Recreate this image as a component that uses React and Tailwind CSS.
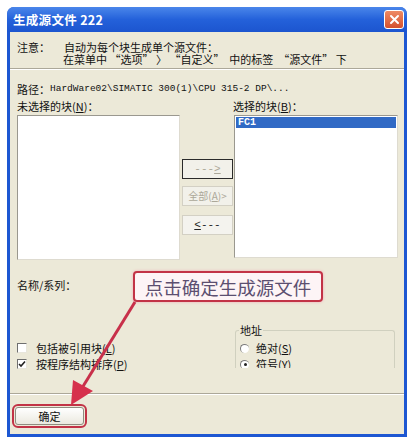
import React from 'react'

const cjk = { fontFamily: '"Noto Sans CJK SC", "Noto Sans", sans-serif' }
const mono = { fontFamily: '"Liberation Mono", "Noto Sans CJK SC", monospace' }

function CheckBox({ checked, children }) {
  return (
    <div className="flex items-center h-[16px]">
      <div className="w-[10px] h-[10px] ml-[7px] border-t border-l border-[#6f6f6f] border-r border-b border-r-[#e8e6dc] border-b-[#e8e6dc] bg-white flex items-center justify-center">
        {checked && (
          <svg width="8" height="8" viewBox="0 0 8 8">
            <path d="M1 4 L3 6 L7 1.5" stroke="#222" strokeWidth="1.6" fill="none" />
          </svg>
        )}
      </div>
      <div className="ml-[9px]">{children}</div>
    </div>
  )
}

function Radio({ checked, children }) {
  return (
    <div className="flex items-center h-[16px]">
      <div className="w-[9px] h-[9px] ml-[5px] rounded-full border-t border-l border-[#7a7a7a] border-r-[#ece9d8] border-b-[#ece9d8] bg-white flex items-center justify-center">
        {checked && <div className="w-[3px] h-[3px] rounded-full bg-[#222]" />}
      </div>
      <div className="ml-[7px]">{children}</div>
    </div>
  )
}

export default function App() {
  return (
    <div className="relative w-[416px] h-[444px] bg-white overflow-hidden text-[11px] leading-[12px] text-[#111]" style={cjk}>
      <div className="absolute left-[7px] top-[7px] w-[400px] h-[430px] flex flex-col rounded-t-[7px] bg-[#1d57d2] px-[3px] pb-[3px]">
        {/* title bar */}
        <div className="h-[25px] flex items-center justify-between rounded-t-[7px] bg-gradient-to-b from-[#4a86ea] via-[#2461da] to-[#1c55cf] -mx-[3px] px-[6px]">
          <div className="text-white font-bold text-[12.5px] tracking-[0.3px]">生成源文件 222</div>
          <div className="w-[20px] h-[19px] mr-[-3px] rounded-[3px] border border-white bg-gradient-to-b from-[#ee8a64] to-[#d4502e] flex items-center justify-center">
            <svg width="11" height="11" viewBox="0 0 11 11">
              <path d="M2 2 L9 9 M9 2 L2 9" stroke="#fff" strokeWidth="2" strokeLinecap="round" />
            </svg>
          </div>
        </div>

        {/* body */}
        <div className="flex-1 bg-[#ece9d8] flex flex-col">
          <div className="flex pl-[7px] pt-[9px]">
            <div className="w-[46px]">注意：</div>
            <div>
              <div className="pl-[1px]">自动为每个块生成单个源文件：</div>
              <div className="whitespace-pre">在菜单中 “选项” 〉 “自定义”  中的标签  “源文件” 下</div>
            </div>
          </div>
          <div className="mt-[3px] h-[2px] border-t border-[#aca899] border-b border-b-white" />

          <div className="mt-[13px] pl-[7px] flex items-center">
            <span>路径：</span>
            <span className="text-[9.5px]" style={mono}>HardWare02\SIMATIC 300(1)\CPU 315-2 DP\...</span>
          </div>

          <div className="mt-[5px] flex">
            <div className="w-[223px] pl-[7px]">未选择的块(<u>N</u>)：</div>
            <div>选择的块(<u>B</u>)：</div>
          </div>

          <div className="mt-[3px] flex pl-[7px]">
            <div className="w-[163px] h-[145px] bg-white border border-[#9a988f] border-r-[#dedbd0] border-b-[#dedbd0]" />
            <div className="w-[54px] pt-[44px] flex flex-col">
              <div className="ml-[2px] w-[51px] h-[20px] border border-[#2a2a2a] bg-[#f2f1ea] flex items-center justify-center text-[#aca899]" style={mono}>
                ---<u>&gt;</u>
              </div>
              <div className="ml-[2px] mt-[7px] w-[51px] h-[20px] border border-[#d3d0c4] bg-[#f2f1ea] flex items-center justify-center text-[#aca899] text-[10px]">
                全部(<u>A</u>)&gt;
              </div>
              <div className="ml-[2px] mt-[9px] w-[51px] h-[20px] border border-[#d3d0c4] bg-[#f4f3ee] flex items-center justify-center text-[#222]" style={mono}>
                <u>&lt;</u>---
              </div>
            </div>
            <div className="w-[164px] h-[143px] bg-white border border-[#9a988f] border-r-[#dedbd0] border-b-[#dedbd0] p-[1px]">
              <div className="h-[11px] bg-[#316ac5] text-white text-[10px] leading-[11px] pl-[2px] font-bold" style={mono}>FC1</div>
            </div>
          </div>

          <div className="mt-[19px] pl-[7px]">名称/系列：</div>

          <div className="mt-[33px] flex h-[44px]">
            <div className="w-[225px] pt-[16px]">
              <CheckBox>包括被引用块(<u>L</u>)</CheckBox>
              <CheckBox checked>按程序结构排序(<u>P</u>)</CheckBox>
            </div>
            <div className="w-[160px] h-[44px] relative flex flex-col">
              <div className="absolute left-0 right-0 top-[6px] bottom-0 border-t border-l border-r border-[#d0d0bf] rounded-t-[3px]" />
              <div className="relative h-[13px]">
                <span className="ml-[4px] px-[1px] bg-[#ece9d8]">地址</span>
              </div>
              <div className="relative mt-[3px] h-[28px] overflow-hidden">
                <Radio>绝对(<u>S</u>)</Radio>
                <Radio checked>符号(<u>Y</u>)</Radio>
              </div>
            </div>
          </div>

          <div className="mt-[25px] h-[2px] border-t border-[#aca899] border-b border-b-white" />

          <div className="mt-[9px] ml-[2px] w-[75px] h-[24px] rounded-[6px] border-2 border-[#c23346] p-[1px]">
            <div className="h-full rounded-[3px] border border-[#8f8c80] bg-gradient-to-b from-white to-[#ebe9df] flex items-center justify-center">
              确定
            </div>
          </div>
        </div>
      </div>

      {/* annotation */}
      <div className="absolute left-[133px] top-[271px] w-[190px] h-[31px] rounded-[4px] border-2 border-[#c23346] bg-[#fdf4f6] shadow-[0_0_3px_#f1a7b4] flex items-center justify-center whitespace-nowrap text-[18.5px] leading-[22px] text-[#5c4f70]">
        点击确定生成源文件
      </div>
      <svg className="absolute left-0 top-0" width="416" height="444" viewBox="0 0 416 444">
        <line x1="135" y1="302" x2="82" y2="388" stroke="#c8304a" strokeWidth="3" />
        <path d="M71 405 L73 380 L93 391 Z" fill="#d6304c" />
      </svg>
    </div>
  )
}
